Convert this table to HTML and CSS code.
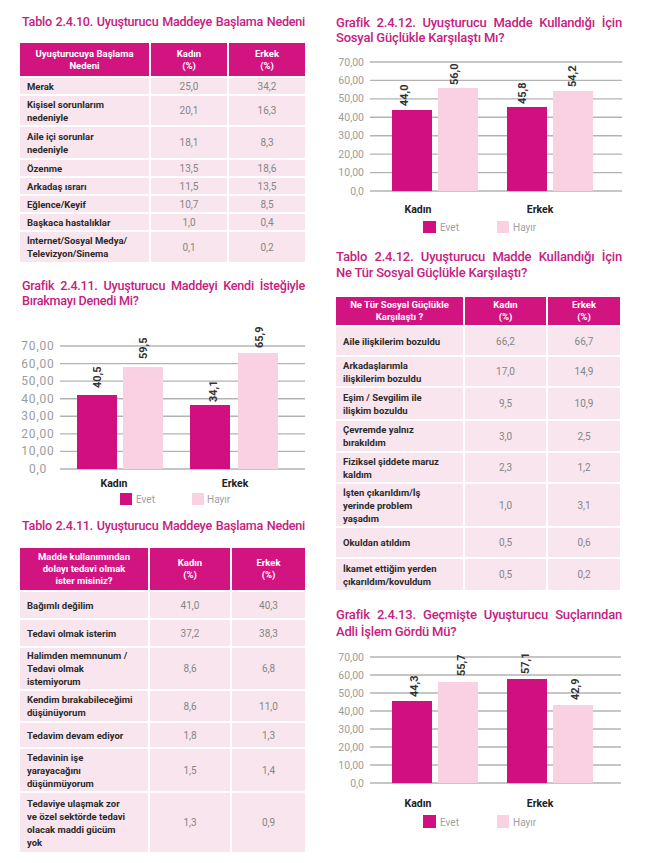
FILE: index.html
```html
<!DOCTYPE html>
<html lang="tr">
<head>
<meta charset="utf-8">
<title>Uyuşturucu Madde Kullanımı</title>
<link rel="stylesheet" href="styles.css">
</head>
<body>
<div class="page">
  <section class="col col-left">
    <h2 class="title t-l1"><span class="jl">Tablo 2.4.10. Uyuşturucu Maddeye Başlama Nedeni</span></h2>
    <div class="tbl tbl1">
      <div class="th">Uyuşturucuya Başlama<br>Nedeni</div>
      <div class="th">Kadın<br>(%)</div>
      <div class="th">Erkek<br>(%)</div>
      <div class="td lab">Merak</div><div class="td val">25,0</div><div class="td val">34,2</div>
      <div class="td lab">Kişisel sorunlarım<br>nedeniyle</div><div class="td val">20,1</div><div class="td val">16,3</div>
      <div class="td lab">Aile içi sorunlar<br>nedeniyle</div><div class="td val">18,1</div><div class="td val">8,3</div>
      <div class="td lab">Özenme</div><div class="td val">13,5</div><div class="td val">18,6</div>
      <div class="td lab">Arkadaş ısrarı</div><div class="td val">11,5</div><div class="td val">13,5</div>
      <div class="td lab">Eğlence/Keyif</div><div class="td val">10,7</div><div class="td val">8,5</div>
      <div class="td lab">Başkaca hastalıklar</div><div class="td val">1,0</div><div class="td val">0,4</div>
      <div class="td lab">İnternet/Sosyal Medya/<br>Televizyon/Sinema</div><div class="td val">0,1</div><div class="td val">0,2</div>
    </div>

    <h2 class="title t-l2"><span class="jl">Grafik 2.4.11. Uyuşturucu Maddeyi Kendi İsteğiyle</span><span class="ln">Bırakmayı Denedi Mi?</span></h2>
    <svg class="chart" width="286" height="204" viewBox="20 308 286 204">
      <g class="grid">
        <line x1="60" x2="305" y1="346" y2="346"/>
        <line x1="60" x2="305" y1="363.6" y2="363.6"/>
        <line x1="60" x2="305" y1="381.1" y2="381.1"/>
        <line x1="60" x2="305" y1="398.7" y2="398.7"/>
        <line x1="60" x2="305" y1="416.3" y2="416.3"/>
        <line x1="60" x2="305" y1="433.9" y2="433.9"/>
        <line x1="60" x2="305" y1="451.4" y2="451.4"/>
        <line x1="60" x2="305" y1="469" y2="469"/>
      </g>
      <g class="ylab ylab-wide">
        <text x="38" y="346">70,00</text>
        <text x="38" y="363.6">60,00</text>
        <text x="38" y="381.1">50,00</text>
        <text x="38" y="398.7">40,00</text>
        <text x="38" y="416.3">30,00</text>
        <text x="38" y="433.9">20,00</text>
        <text x="38" y="451.4">10,00</text>
        <text x="38" y="469">0,0</text>
      </g>
      <rect class="evet" x="77" y="395" width="40" height="74"/>
      <rect class="hayir" x="123" y="367" width="40" height="102"/>
      <rect class="evet" x="190" y="405" width="40" height="64"/>
      <rect class="hayir" x="238" y="353" width="40" height="116"/>
      <text class="vlab" transform="translate(100.5 388) rotate(-90)">40,5</text>
      <text class="vlab" transform="translate(147 359) rotate(-90)">59,5</text>
      <text class="vlab" transform="translate(217 402) rotate(-90)">34,1</text>
      <text class="vlab" transform="translate(263 348) rotate(-90)">65,9</text>
      <text class="cat" x="114" y="483">Kadın</text>
      <text class="cat" x="235" y="483">Erkek</text>
      <rect class="evet" x="120" y="493" width="12" height="12"/>
      <text class="leg" x="136" y="499.5">Evet</text>
      <rect class="hayir" x="192" y="493" width="12" height="12"/>
      <text class="leg" x="207" y="499.5">Hayır</text>
    </svg>

    <h2 class="title t-l3"><span class="jl">Tablo 2.4.11. Uyuşturucu Maddeye Başlama Nedeni</span></h2>
    <div class="tbl tbl2">
      <div class="th">Madde kullanımından<br>dolayı tedavi olmak<br>ister misiniz?</div>
      <div class="th">Kadın<br>(%)</div>
      <div class="th">Erkek<br>(%)</div>
      <div class="td lab">Bağımlı değilim</div><div class="td val">41,0</div><div class="td val">40,3</div>
      <div class="td lab">Tedavi olmak isterim</div><div class="td val">37,2</div><div class="td val">38,3</div>
      <div class="td lab">Halimden memnunum /<br>Tedavi olmak<br>istemiyorum</div><div class="td val">8,6</div><div class="td val">6,8</div>
      <div class="td lab">Kendim bırakabileceğimi<br>düşünüyorum</div><div class="td val">8,6</div><div class="td val">11,0</div>
      <div class="td lab">Tedavim devam ediyor</div><div class="td val">1,8</div><div class="td val">1,3</div>
      <div class="td lab">Tedavinin işe<br>yarayacağını<br>düşünmüyorum</div><div class="td val">1,5</div><div class="td val">1,4</div>
      <div class="td lab">Tedaviye ulaşmak zor<br>ve özel sektörde tedavi<br>olacak maddi gücüm<br>yok</div><div class="td val">1,3</div><div class="td val">0,9</div>
    </div>
  </section>

  <section class="col col-right">
    <h2 class="title t-r1"><span class="jl">Grafik 2.4.12. Uyuşturucu Madde Kullandığı İçin</span><span class="ln">Sosyal Güçlükle Karşılaştı Mı?</span></h2>
    <svg class="chart" width="286" height="195" viewBox="336 45 286 195">
      <g class="grid">
        <line x1="370" x2="622" y1="62" y2="62"/>
        <line x1="370" x2="622" y1="80.4" y2="80.4"/>
        <line x1="370" x2="622" y1="98.9" y2="98.9"/>
        <line x1="370" x2="622" y1="117.3" y2="117.3"/>
        <line x1="370" x2="622" y1="135.7" y2="135.7"/>
        <line x1="370" x2="622" y1="154.1" y2="154.1"/>
        <line x1="370" x2="622" y1="172.6" y2="172.6"/>
        <line x1="370" x2="622" y1="191" y2="191"/>
      </g>
      <g class="ylab">
        <text x="364" y="62">70,00</text>
        <text x="364" y="80.4">60,00</text>
        <text x="364" y="98.9">50,00</text>
        <text x="364" y="117.3">40,00</text>
        <text x="364" y="135.7">30,00</text>
        <text x="364" y="154.1">20,00</text>
        <text x="364" y="172.6">10,00</text>
        <text x="364" y="191">0,0</text>
      </g>
      <rect class="evet" x="392" y="110" width="40" height="81"/>
      <rect class="hayir" x="438" y="88" width="40" height="103"/>
      <rect class="evet" x="507" y="107" width="40" height="84"/>
      <rect class="hayir" x="553" y="91" width="40" height="100"/>
      <text class="vlab" transform="translate(407.5 106) rotate(-90)">44,0</text>
      <text class="vlab" transform="translate(457.5 85) rotate(-90)">56,0</text>
      <text class="vlab" transform="translate(525.5 104) rotate(-90)">45,8</text>
      <text class="vlab" transform="translate(575.5 87) rotate(-90)">54,2</text>
      <text class="cat" x="418" y="209">Kadın</text>
      <text class="cat" x="540" y="209">Erkek</text>
      <rect class="evet" x="423" y="221" width="13" height="12"/>
      <text class="leg" x="440" y="227.5">Evet</text>
      <rect class="hayir" x="497" y="221" width="12" height="12"/>
      <text class="leg" x="513" y="227.5">Hayır</text>
    </svg>

    <h2 class="title t-r2"><span class="jl">Tablo 2.4.12. Uyuşturucu Madde Kullandığı İçin</span><span class="ln">Ne Tür Sosyal Güçlükle Karşılaştı?</span></h2>
    <div class="tbl tbl3">
      <div class="th">Ne Tür Sosyal Güçlükle<br>Karşılaştı ?</div>
      <div class="th">Kadın<br>(%)</div>
      <div class="th">Erkek<br>(%)</div>
      <div class="td lab">Aile ilişkilerim bozuldu</div><div class="td val">66,2</div><div class="td val">66,7</div>
      <div class="td lab">Arkadaşlarımla<br>ilişkilerim bozuldu</div><div class="td val">17,0</div><div class="td val">14,9</div>
      <div class="td lab">Eşim / Sevgilim ile<br>ilişkim bozuldu</div><div class="td val">9,5</div><div class="td val">10,9</div>
      <div class="td lab">Çevremde yalnız<br>bırakıldım</div><div class="td val">3,0</div><div class="td val">2,5</div>
      <div class="td lab">Fiziksel şiddete maruz<br>kaldım</div><div class="td val">2,3</div><div class="td val">1,2</div>
      <div class="td lab">İşten çıkarıldım/İş<br>yerinde problem<br>yaşadım</div><div class="td val">1,0</div><div class="td val">3,1</div>
      <div class="td lab">Okuldan atıldım</div><div class="td val">0,5</div><div class="td val">0,6</div>
      <div class="td lab">İkamet ettiğim yerden<br>çıkarıldım/kovuldum</div><div class="td val">0,5</div><div class="td val">0,2</div>
    </div>

    <h2 class="title t-r3"><span class="jl">Grafik 2.4.13. Geçmişte Uyuşturucu Suçlarından</span><span class="ln">Adli İşlem Gördü Mü?</span></h2>
    <svg class="chart" width="286" height="200" viewBox="336 640 286 200">
      <g class="grid">
        <line x1="370" x2="621" y1="657" y2="657"/>
        <line x1="370" x2="621" y1="675" y2="675"/>
        <line x1="370" x2="621" y1="693" y2="693"/>
        <line x1="370" x2="621" y1="711" y2="711"/>
        <line x1="370" x2="621" y1="729" y2="729"/>
        <line x1="370" x2="621" y1="747" y2="747"/>
        <line x1="370" x2="621" y1="765" y2="765"/>
        <line x1="370" x2="621" y1="783" y2="783"/>
      </g>
      <g class="ylab">
        <text x="364" y="657">70,00</text>
        <text x="364" y="675">60,00</text>
        <text x="364" y="693">50,00</text>
        <text x="364" y="711">40,00</text>
        <text x="364" y="729">30,00</text>
        <text x="364" y="747">20,00</text>
        <text x="364" y="765">10,00</text>
        <text x="364" y="783">0,0</text>
      </g>
      <rect class="evet" x="392" y="701" width="40" height="82"/>
      <rect class="hayir" x="438" y="682" width="40" height="101"/>
      <rect class="evet" x="507" y="679" width="40" height="104"/>
      <rect class="hayir" x="553" y="705" width="40" height="78"/>
      <text class="vlab" transform="translate(418 697) rotate(-90)">44,3</text>
      <text class="vlab" transform="translate(465 676) rotate(-90)">55,7</text>
      <text class="vlab" transform="translate(529 674) rotate(-90)">57,1</text>
      <text class="vlab" transform="translate(579 700) rotate(-90)">42,9</text>
      <text class="cat" x="418" y="803">Kadın</text>
      <text class="cat" x="540" y="803">Erkek</text>
      <rect class="evet" x="423" y="815" width="13" height="13"/>
      <text class="leg" x="440" y="822">Evet</text>
      <rect class="hayir" x="497" y="815" width="12" height="13"/>
      <text class="leg" x="513" y="822">Hayır</text>
    </svg>
  </section>
</div>
</body>
</html>
```

FILE: styles.css
```css
* {
  box-sizing: border-box;
}

html, body {
  margin: 0;
  padding: 0;
  background: #ffffff;
}

body {
  font-family: Roboto, "Liberation Sans", sans-serif;
  color: #222222;
}

.page {
  display: grid;
  grid-template-columns: 286px 286px;
  column-gap: 30px;
  padding-left: 20px;
  width: 650px;
  height: 863px;
  overflow: hidden;
}

.col {
  display: flex;
  flex-direction: column;
  align-items: flex-start;
}

/* Titles */
.title {
  margin: 0;
  width: 100%;
  font-size: 13px;
  font-weight: 500;
  letter-spacing: -0.2px;
  color: #c6217f;
}

.col-left .title {
  font-size: 12.6px;
  letter-spacing: -0.25px;
}

.jl {
  display: block;
  text-align: justify;
  text-align-last: justify;
}

.ln {
  display: block;
}

.t-l1 {
  margin-top: 14px;
  line-height: 16px;
  padding: 0 1px 0 2px;
}

.t-l2 {
  margin-top: 16px;
  line-height: 15px;
  padding: 0 1px 0 2px;
}

.t-l3 {
  margin-top: 6px;
  line-height: 16px;
  padding: 0 1px 0 2px;
}

.t-r1 {
  margin-top: 15px;
  line-height: 15px;
}

.t-r2 {
  margin-top: 9px;
  line-height: 15.5px;
}

.t-r3 {
  margin-top: 17px;
  line-height: 16.5px;
}

/* Tables */
.tbl {
  display: grid;
  gap: 2px;
}

.tbl1 {
  margin-top: 13px;
  grid-template-columns: 129px 76px 76px;
  grid-template-rows: 33px 16px 29px 31px 16px 16px 16px 16px 30px;
}

.tbl2 {
  margin-top: 14px;
  grid-template-columns: 128px 80px 73px;
  grid-template-rows: 42px 26px 26px 41px 30px 24px 42px 59px;
}

.tbl3 {
  margin-top: 17px;
  grid-template-columns: 127px 81px 72px;
  grid-template-rows: 28px 28px 29px 31px 30px 29px 42px 29px 31px;
}

.th {
  background: #d21480;
  color: #ffffff;
  font-weight: 700;
  font-size: 9.5px;
  line-height: 12px;
  display: flex;
  align-items: center;
  justify-content: center;
  text-align: center;
}

.td {
  background: #f8e5ee;
  display: flex;
  align-items: center;
  font-size: 9.5px;
  line-height: 13px;
}

.lab {
  font-weight: 700;
  color: #2b2b2b;
  padding-left: 7px;
}

.val {
  justify-content: center;
  color: #858585;
  font-size: 10px;
}

/* Charts */
.chart {
  display: block;
  overflow: visible;
}

.chart text {
  font-family: Roboto, "Liberation Sans", sans-serif;
}

.grid line {
  stroke: #b3b3b3;
  stroke-width: 1.4;
}

.ylab text {
  font-size: 10.5px;
  fill: #9c9c9c;
  text-anchor: end;
  dominant-baseline: central;
}

.ylab-wide text {
  font-size: 12px;
  letter-spacing: 0.8px;
  text-anchor: middle;
}

.evet {
  fill: #d10f80;
}

.hayir {
  fill: #f9d1e3;
}

.vlab {
  font-size: 11px;
  font-weight: 700;
  fill: #333333;
}

.cat {
  font-size: 10.5px;
  font-weight: 700;
  fill: #222222;
  text-anchor: middle;
  dominant-baseline: central;
}

.leg {
  font-size: 10px;
  fill: #a0a0a0;
  dominant-baseline: central;
}
```
